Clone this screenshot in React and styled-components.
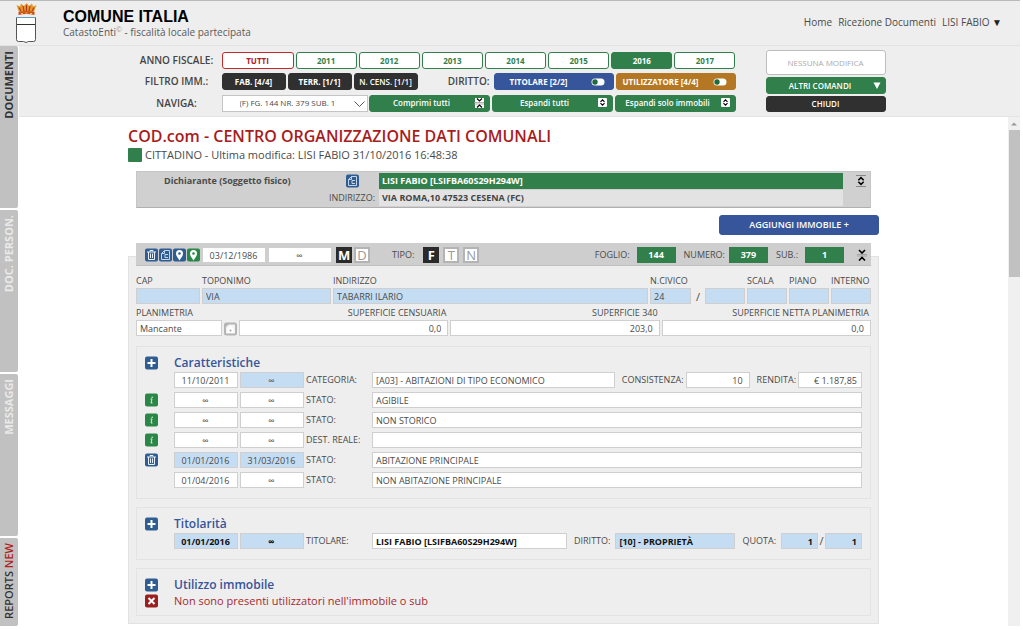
import React from "react";
import styled, { createGlobalStyle, css } from "styled-components";

const c = {
  grey: "#eeeeee",
  green: "#31804c",
  blue: "#36559b",
  icon: "#2f5d92",
  red: "#b02020",
  dark: "#303030",
  text: "#4a4a4a",
  sky: "#c5ddf3",
  line: "#cfcfcf",
};

const GlobalStyle = createGlobalStyle`
  *, *::before, *::after { box-sizing: border-box; }
  body {
    margin: 0;
    background: #fff;
    color: ${c.text};
    font-family: "Open Sans", "Liberation Sans", sans-serif;
    font-size: 9px;
    line-height: 14px;
  }
  button, input, select { font: inherit; color: inherit; margin: 0; border-radius: 0; min-width: 0; }
  h1, h2, h3, p { margin: 0; }
`;

/* ---------- page frame ---------- */

const Page = styled.div`
  margin-right: 3px;
  border-top: 1px solid #b9b9b9;
`;

const Header = styled.header`
  display: flex;
  align-items: center;
  height: 45px;
  padding: 0 18px 0 15px;
  background: ${c.grey};
  border-bottom: 1px solid #e2e2e2;
`;

const Brand = styled.div`
  flex: 1;
  margin-left: 25px;
  padding-top: 2px;
`;

const BrandName = styled.h1`
  font: bold 16px/16px "Liberation Sans", sans-serif;
  color: #000;
`;

const BrandLine = styled.p`
  font-size: 10px;
  line-height: 14px;
  color: #5a5a5a;
  sup { font-size: 7px; line-height: 1px; color: #999; }
`;

const Nav = styled.nav`
  display: flex;
  gap: 6px;
  font-size: 10px;
  padding-bottom: 2px;
  a { color: ${c.text}; text-decoration: none; }
  span { color: #222; }
`;

const Body = styled.div`
  display: flex;
`;

const SideTabs = styled.nav`
  display: flex;
  flex-direction: column;
  gap: 2px;
  width: 19px;
  padding-right: 1px;
`;

const SideTab = styled.button`
  display: flex;
  align-items: flex-start;
  justify-content: center;
  width: 18px;
  height: ${(p) => (p.$last ? "auto" : "162px")};
  flex: ${(p) => (p.$last ? "1" : "none")};
  padding: 5px 0 0;
  border: 0;
  border-radius: 0 2px 2px 0;
  background: #c1c1c1;
  color: ${(p) => (p.$dim ? "#e9e9e9" : "#333")};
  font-size: 11px;
  line-height: 14px;
  font-weight: ${(p) => (p.$last ? 600 : 700)};
  span { writing-mode: vertical-rl; transform: rotate(180deg); white-space: nowrap; }
  em { font-style: normal; color: ${c.red}; }
`;

const Column = styled.div`
  flex: 1;
  min-width: 0;
`;

/* ---------- toolbar ---------- */

const Toolbar = styled.div`
  height: 71px;
  padding: 4px 20px 0 0;
  background: ${c.grey};
  border-bottom: 1px solid #e4e4e4;
`;

const ToolbarInner = styled.div`
  display: flex;
  gap: 30px;
  max-width: 752px;
  margin: 0 auto;
`;

const ToolRows = styled.div`
  flex: 1;
  display: grid;
  gap: 4px;
  padding-top: 2px;
`;

const ToolRow = styled.div`
  display: flex;
  gap: 2px;
  height: 17px;
`;

const ToolLabel = styled.span`
  width: ${(p) => (p.$narrow ? "72px" : "86px")};
  text-align: ${(p) => (p.$narrow ? "right" : "center")};
  padding-right: ${(p) => (p.$narrow ? "2px" : "0")};
  font-size: 10px;
  line-height: 16px;
  font-weight: 600;
  color: #444;
`;

const tones = {
  green: css`background: ${c.green}; border-color: ${c.green}; color: #fff;`,
  dark: css`background: ${c.dark}; border-color: ${c.dark}; color: #fff;`,
  blue: css`background: ${c.blue}; border-color: ${c.blue}; color: #fff;`,
  amber: css`background: #b47723; border-color: #b47723; color: #fff;`,
  greenLine: css`background: #fff; border-color: ${c.green}; color: ${c.green};`,
  redLine: css`background: #fff; border-color: #c02a2a; color: ${c.red};`,
  idle: css`background: #fff; border-color: #bdbdbd; color: #aaa; font-weight: 400;`,
};

const Button = styled.button`
  display: flex;
  align-items: center;
  justify-content: center;
  gap: ${(p) => (p.$inset ? 8 : 3)}px;
  flex: ${(p) => (p.$w ? "none" : "1")};
  width: ${(p) => (p.$w ? p.$w + "px" : "auto")};
  height: ${(p) => p.$h || 17}px;
  padding: 0 ${(p) => (p.$inset ? 8 : 4)}px 0 ${(p) => (p.$inset ? 0 : 4)}px;
  border: 1px solid;
  border-radius: 3px;
  font-size: ${(p) => p.$size || 8}px;
  line-height: 14px;
  font-weight: ${(p) => (p.$semi ? 600 : 700)};
  white-space: nowrap;
  ${(p) => tones[p.$tone]}
  > span { flex: 1; text-align: center; }
  > svg { flex: none; }
`;

const NavSelect = styled.select`
  width: 146px;
  height: 17px;
  padding: 0 16px 0 17px;
  border: 1px solid #c4c4c4;
  appearance: none;
  background: #fff;
  font-size: 8px;
`;

const SelectWrap = styled.div`
  position: relative;
  display: flex;
  margin-right: -1px;
  svg { position: absolute; right: 2px; top: 5px; pointer-events: none; }
`;

const Commands = styled.div`
  display: grid;
  gap: 2px;
  width: 120px;
  align-content: start;
`;

/* ---------- content ---------- */

const Viewport = styled.div`
  display: flex;
  background: #fff;
`;

const Content = styled.main`
  flex: 1;
  min-width: 0;
  padding: 8px 20px 2px 0;
`;

const ContentInner = styled.div`
  max-width: 751px;
  margin: 0 auto;
`;

const Scroll = styled.div`
  width: 12px;
  background: #f0f0f0;
  svg { display: block; margin: 0 auto; }
`;

const Thumb = styled.div`
  height: 147px;
  margin-left: 1px;
  background: #c1c1c1;
`;

const Title = styled.h2`
  font-size: 16px;
  line-height: 22px;
  font-weight: 600;
  color: #a81c1c;
`;

const Status = styled.p`
  display: flex;
  align-items: center;
  gap: 3px;
  height: 16px;
  font-size: 11px;
  &::before { content: ""; width: 14px; height: 14px; border-radius: 1px; background: ${c.green}; }
`;

const Declarant = styled.section`
  display: grid;
  grid-template-columns: 209px 33px 1fr 27px;
  row-gap: 1px;
  align-items: center;
  margin: 8px 8px 0;
  padding: 1px 0;
  background: #d0d0d0;
  border: 1px solid #c6c6c6;
  border-bottom-color: #b0b0b0;
  > svg { justify-self: end; margin-right: 3px; }
`;

const DeclarantName = styled.strong`
  padding-left: 27px;
`;

const Strip = styled.div`
  height: 16px;
  padding-left: 3px;
  line-height: 16px;
  font-weight: 700;
  background: ${(p) => (p.$on ? c.green : "#e3e3e3")};
  color: ${(p) => (p.$on ? "#fff" : "#444")};
`;

const StripLabel = styled.span`
  grid-column: 1 / 3;
  padding-right: 4px;
  text-align: right;
`;

const AddRow = styled.div`
  display: flex;
  justify-content: flex-end;
  margin-top: 7px;
`;

const Panel = styled.section`
  margin-top: 21px;
  padding: 0 7px 7px;
  background: ${c.grey};
  border: 1px solid #e2e2e2;
`;

const PanelBar = styled.div`
  display: flex;
  align-items: center;
  gap: 2px;
  height: 23px;
  margin-top: -14px;
  padding: 2px 3px 0 9px;
  background: #cecece;
  border: 1px solid #c0c0c0;
  border-width: 0 0 1px;
`;

const IconGroup = styled.div`
  display: flex;
  gap: 1px;
`;

const Letters = styled.div`
  display: flex;
  gap: ${(p) => p.$gap}px;
  margin: 0 ${(p) => p.$after || 0}px 0 2px;
`;

const IconButton = styled.button`
  display: flex;
  padding: 0;
  border: 0;
  background: none;
`;

const Letter = styled.button`
  width: 16px;
  height: 16px;
  padding: 0;
  border: 2px solid ${(p) => (p.$on ? "#2a2a2a" : "#b4b4b4")};
  background: ${(p) => (p.$on ? "#2a2a2a" : "#fff")};
  color: ${(p) => (p.$on ? "#fff" : "#999")};
  font-size: 13px;
  line-height: 12px;
  font-weight: ${(p) => (p.$on ? 700 : 400)};
`;

const BarLabel = styled.span`
  flex: ${(p) => (p.$grow ? 1 : "none")};
  padding: 0 ${(p) => p.$after || 5}px 0 ${(p) => p.$before || 6}px;
  text-align: ${(p) => (p.$grow ? "right" : "left")};
`;

const Badge = styled.strong`
  width: 39px;
  height: 16px;
  margin-right: ${(p) => p.$after || 0}px;
  background: ${c.green};
  color: #fff;
  line-height: 16px;
  text-align: center;
`;

const Input = styled.input`
  width: ${(p) => (p.$w ? p.$w + "px" : "100%")};
  height: 16px;
  padding: 0 ${(p) => p.$end || 4}px 0 3px;
  border: 1px solid ${c.line};
  background: ${(p) => (p.$blue ? c.sky : "#fff")};
  text-align: ${(p) => p.$align || "left"};
  font-weight: ${(p) => (p.$bold ? 700 : 400)};
  color: ${(p) => (p.$bold ? "#111" : c.text)};
  outline: 0;
`;

const FieldRow = styled.div`
  display: grid;
  grid-template-columns: ${(p) => p.$cols};
  column-gap: 2px;
  align-items: end;
  margin-top: ${(p) => p.$top || 1}px;
`;

const Field = styled.label`
  display: block;
  text-align: ${(p) => (p.$right ? "right" : "left")};
  white-space: nowrap;
  span { display: block; height: 15px; line-height: 16px; padding-right: ${(p) => (p.$right ? 2 : 0)}px; }
  input { display: block; }
`;

const Slash = styled.span`
  flex: none;
  width: 7px;
  justify-self: center;
  text-align: center;
  font-size: 11px;
`;

const Card = styled.section`
  margin-top: ${(p) => p.$top || 8}px;
  padding: 7px 8px ${(p) => p.$bottom}px 8px;
  border: 1px solid #e3e3e3;
`;

const CardHead = styled.div`
  display: grid;
  grid-template-columns: 29px 1fr;
  align-items: center;
  height: ${(p) => (p.$low ? 14 : 18)}px;
`;

const CardTitle = styled.h3`
  font-size: 12px;
  line-height: 16px;
  font-weight: 600;
  color: ${c.blue};
`;

const Line = styled.div`
  display: grid;
  grid-template-columns: 27px 64px 64px 64px 1fr;
  column-gap: 2px;
  align-items: center;
  height: 16px;
  margin-bottom: ${(p) => (p.$tight ? 0 : 4)}px;
`;

const Group = styled.div`
  display: flex;
  align-items: center;
  label { flex: none; text-align: right; padding: 0 ${(p) => p.$pad || 2}px 0 7px; }
  input { flex: none; }
  input:first-child { flex: 1; }
`;

const Empty = styled.p`
  font-size: 11px;
  line-height: 14px;
  color: #a52a2f;
`;

/* ---------- icons ---------- */

const Crest = () => (
  <svg width="23" height="40" viewBox="0 0 23 40" aria-hidden="true">
    <path d="M4 9 1.500 2l3.500 1.500L6 .5l3 2.500L11.500 0 14 3l3-2.500 1 3L21.500 2 19 9z" fill="#e39a2b" />
    <path d="M4 4.500l2 3.500M8 3l1 5M11.500 2v6M15 3l-1 5M19 4.500l-2 3.500" stroke="#b3371c" strokeWidth="1.200" />
    <path d="M3.500 9q8-2 16 0v3q-8-2-16 0z" fill="#c9521f" />
    <path d="M6 10.500h2M10.500 10h2M15 10.500h2" stroke="#f4c651" />
    <path d="M1.500 14.500h19v22q0 2-2 2h-5l-2.500 1-2.500-1h-5q-2 0-2-2z" fill="#fff" stroke="#555" />
    <path d="M1 14.500h20" stroke="#5f9dbb" />
    <path d="M2 21.500h18" stroke="#333" />
  </svg>
);

const Tile = ({ fill = c.icon, children }) => (
  <svg width="13" height="14" viewBox="0 0 13 14" aria-hidden="true">
    <rect x="0" y="0.500" width="13" height="13" rx="2" fill={fill} />
    {children}
  </svg>
);
const Trash = () => (
  <Tile>
    <path d="M2 4h9M5 3.500v-1h3v1" fill="none" stroke="#e8f0f7" />
    <path d="M3.500 4v7.500h6V4M5.500 5.500V10M7.500 5.500V10" fill="none" stroke="#e8f0f7" />
  </Tile>
);
const Sheet = () => (
  <Tile>
    <path d="M5.500 2.500h5v9h-8v-6zM5.500 2.500v3h-3M9 6.500H6v3h3" fill="none" stroke="#c3d5e6" />
  </Tile>
);
const Pin = ({ fill }) => (
  <Tile fill={fill}>
    <path d="M6.500 12.500C5 10 3 8 3 5.500a3.500 3.500 0 0 1 7 0C10 8 8 10 6.500 12.500z" fill="#fff" />
    <circle cx="6.500" cy="5.500" r="1.300" fill={fill || c.icon} />
  </Tile>
);
const Plus = () => (
  <Tile><path d="M6.500 3v8M2.500 7h8" stroke="#fff" strokeWidth="2" /></Tile>
);
const Cross = () => (
  <Tile fill="#9c1f1f"><path d="M3.500 4l6 6M9.500 4l-6 6" stroke="#fff" strokeWidth="2" /></Tile>
);
const Info = () => (
  <Tile fill="#2a8748">
    <path d="M5.500 6h1.500l-1 4h1.500" fill="none" stroke="#d9efc8" />
    <circle cx="7.200" cy="4.200" r="0.800" fill="#d9efc8" />
  </Tile>
);
const Upload = () => (
  <svg width="13" height="14" viewBox="0 0 13 14" aria-hidden="true">
    <rect x="1" y="1.500" width="11" height="11" rx="1.500" fill="#f4f4f4" stroke="#b4b4b4" strokeWidth="2" />
    <path d="M1 1h5L1 6z" fill="#b4b4b4" />
    <path d="M3.500 11V6.500l3-2.500 3 2.500V11z" fill="#fff" />
    <circle cx="6.500" cy="8.500" r="1" fill="#a0a0a0" />
  </svg>
);
const Expand = ({ boxed }) => (
  <svg width="12" height="12" viewBox="0 0 12 12" aria-hidden="true">
    {boxed && <rect x="2" y="1" width="9" height="9" rx="1" fill="#fff" />}
    {!boxed && <path d="M1 0.500h10M1 11.500h10" stroke="#888" />}
    <path
      d={boxed ? "M4.500 4.800l2-2 2 2M4.500 6.200l2 2 2-2" : "M3.300 5.300L6 2.600l2.700 2.700M3.300 6.700L6 9.400l2.700-2.700"}
      fill="none" stroke="#000" strokeWidth={boxed ? 1.1 : 1.5}
    />
  </svg>
);
const Collapse = ({ boxed }) => (
  <svg width="12" height="12" viewBox="0 0 12 12" aria-hidden="true">
    {boxed && <rect x="2" y="1" width="9" height="10" fill="#fff" />}
    <path d="M1 5.500h10M1 7h10" stroke="#999" strokeWidth="0.800" />
    <path
      d={boxed ? "M4 1.500l2.500 2.500L9 1.500M4 10.500L6.500 8 9 10.500" : "M3 1l3 3 3-3M3 11.500l3-3 3 3"}
      fill="none" stroke="#000" strokeWidth={boxed ? 1.2 : 1.6}
    />
  </svg>
);
const Toggle = () => (
  <svg width="14" height="8" viewBox="0 0 14 8" aria-hidden="true">
    <rect x="0.500" y="0.500" width="13" height="7" rx="3.500" fill="#fff" />
    <circle cx="4" cy="4" r="2.700" fill="#1f6b3b" />
  </svg>
);
const Down = () => (
  <svg width="8" height="7" viewBox="0 0 8 7" aria-hidden="true"><path d="M0.500 0.500h7L4 7z" fill="#fff" /></svg>
);
const Chevron = () => (
  <svg width="13" height="8" viewBox="0 0 13 8" aria-hidden="true">
    <path d="M1.500 1.500l5 5 5-5" fill="none" stroke="#555" />
  </svg>
);

/* ---------- data ---------- */

const years = ["2011", "2012", "2013", "2014", "2015", "2016", "2017"];
const states = [
  { id: "agi", icon: <Info />, label: "STATO:", value: "AGIBILE" },
  { id: "sto", icon: <Info />, label: "STATO:", value: "NON STORICO" },
  { id: "des", icon: <Info />, label: "DEST. REALE:", value: "" },
  { id: "abi", icon: <Trash />, label: "STATO:", value: "ABITAZIONE PRINCIPALE", from: "01/01/2016", to: "31/03/2016", blue: true },
  { id: "nab", icon: null, label: "STATO:", value: "NON ABITAZIONE PRINCIPALE", from: "01/04/2016" },
];

const DateInput = (p) => <Input $align="center" {...p} />;

export default function App() {
  return (
    <>
      <GlobalStyle />
      <Page>
        <Header>
          <Crest />
          <Brand>
            <BrandName>COMUNE ITALIA</BrandName>
            <BrandLine>CatastoEnti<sup>©</sup> - fiscalità locale partecipata</BrandLine>
          </Brand>
          <Nav>
            <a href="#home">Home</a>
            <a href="#ricezione">Ricezione Documenti</a>
            <a href="#utente">LISI FABIO <span>▼</span></a>
          </Nav>
        </Header>
        <Body>
          <SideTabs>
            <SideTab><span>DOCUMENTI</span></SideTab>
            <SideTab $dim><span>DOC. PERSON.</span></SideTab>
            <SideTab $dim><span>MESSAGGI</span></SideTab>
            <SideTab $last><span>REPORTS <em>NEW</em></span></SideTab>
          </SideTabs>
          <Column>
            <Toolbar>
              <ToolbarInner>
                <ToolRows>
                  <ToolRow>
                    <ToolLabel>ANNO FISCALE:</ToolLabel>
                    <Button $tone="redLine" $w={72}>TUTTI</Button>
                    {years.map((y) => (
                      <Button key={y} $tone={y === "2016" ? "green" : "greenLine"}>{y}</Button>
                    ))}
                  </ToolRow>
                  <ToolRow>
                    <ToolLabel>FILTRO IMM.:</ToolLabel>
                    <Button $tone="dark" $w={64}>FAB. [4/4]</Button>
                    <Button $tone="dark" $w={64}>TERR. [1/1]</Button>
                    <Button $tone="dark" $w={64} $semi>N. CENS. [1/1]</Button>
                    <ToolLabel $narrow>DIRITTO:</ToolLabel>
                    <Button $tone="blue" $inset><span>TITOLARE [2/2]</span><Toggle /></Button>
                    <Button $tone="amber" $inset><span>UTILIZZATORE [4/4]</span><Toggle /></Button>
                  </ToolRow>
                  <ToolRow>
                    <ToolLabel as="label" htmlFor="naviga">NAVIGA:</ToolLabel>
                    <SelectWrap>
                      <NavSelect id="naviga"><option>(F) FG. 144 NR. 379 SUB. 1</option></NavSelect>
                      <Chevron />
                    </SelectWrap>
                    <Button $tone="green" $semi><span>Comprimi tutti</span><Collapse boxed /></Button>
                    <Button $tone="green" $semi><span>Espandi tutti</span><Expand boxed /></Button>
                    <Button $tone="green" $semi><span>Espandi solo immobili</span><Expand boxed /></Button>
                  </ToolRow>
                </ToolRows>
                <Commands>
                  <Button $tone="idle" $h={25}>NESSUNA MODIFICA</Button>
                  <Button $tone="green" $h={17} $semi><span>ALTRI COMANDI</span><Down /></Button>
                  <Button $tone="dark" $h={16} $semi>CHIUDI</Button>
                </Commands>
              </ToolbarInner>
            </Toolbar>
            <Viewport>
              <Content>
                <ContentInner>
                  <Title>COD.com - CENTRO ORGANIZZAZIONE DATI COMUNALI</Title>
                  <Status>CITTADINO - Ultima modifica: LISI FABIO 31/10/2016 16:48:38</Status>

                  <Declarant>
                    <DeclarantName>Dichiarante (Soggetto fisico)</DeclarantName>
                    <IconButton aria-label="Scheda"><Sheet /></IconButton>
                    <Strip $on>LISI FABIO [LSIFBA60S29H294W]</Strip>
                    <Expand />
                    <StripLabel>INDIRIZZO:</StripLabel>
                    <Strip>VIA ROMA,10 47523 CESENA (FC)</Strip>
                  </Declarant>

                  <AddRow>
                    <Button $tone="blue" $w={160} $h={20} $size={9} $semi>AGGIUNGI IMMOBILE +</Button>
                  </AddRow>

                  <Panel>
                    <PanelBar>
                      <IconGroup>
                        <IconButton aria-label="Elimina"><Trash /></IconButton>
                        <IconButton aria-label="Scheda"><Sheet /></IconButton>
                        <IconButton aria-label="Mappa"><Pin /></IconButton>
                        <IconButton aria-label="Mappa catastale"><Pin fill="#2a8748" /></IconButton>
                      </IconGroup>
                      <DateInput $w={64} aria-label="Dal" defaultValue="03/12/1986" />
                      <DateInput $w={64} aria-label="Al" defaultValue="∞" />
                      <Letters $gap={2} $after={14}>
                        <Letter $on>M</Letter>
                        <Letter>D</Letter>
                      </Letters>
                      <BarLabel>TIPO:</BarLabel>
                      <Letters $gap={4}>
                        <Letter $on>F</Letter>
                        <Letter>T</Letter>
                        <Letter>N</Letter>
                      </Letters>
                      <BarLabel $grow>FOGLIO:</BarLabel>
                      <Badge>144</Badge>
                      <BarLabel $after={2}>NUMERO:</BarLabel>
                      <Badge>379</Badge>
                      <BarLabel>SUB.:</BarLabel>
                      <Badge $after={10}>1</Badge>
                      <IconButton aria-label="Comprimi"><Collapse /></IconButton>
                    </PanelBar>

                    <FieldRow $cols="64px 129px 1fr 41px 10px 40px 40px 40px 40px" $top={7}>
                      <Field><span>CAP</span><Input $blue /></Field>
                      <Field><span>TOPONIMO</span><Input $blue defaultValue="VIA" /></Field>
                      <Field><span>INDIRIZZO</span><Input $blue defaultValue="TABARRI ILARIO" /></Field>
                      <Field><span>N.CIVICO</span><Input $blue defaultValue="24" /></Field>
                      <Slash>/</Slash>
                      <Input $blue aria-label="Esponente" />
                      <Field><span>SCALA</span><Input $blue /></Field>
                      <Field><span>PIANO</span><Input $blue /></Field>
                      <Field><span>INTERNO</span><Input $blue /></Field>
                    </FieldRow>
                    <FieldRow $cols="86px 13px 1fr 1fr 1fr">
                      <Field><span>PLANIMETRIA</span><Input defaultValue="Mancante" /></Field>
                      <IconButton aria-label="Carica planimetria"><Upload /></IconButton>
                      <Field $right><span>SUPERFICIE CENSUARIA</span><Input $align="right" $end={6} defaultValue="0,0" /></Field>
                      <Field $right><span>SUPERFICIE 340</span><Input $align="right" $end={6} defaultValue="203,0" /></Field>
                      <Field $right><span>SUPERFICIE NETTA PLANIMETRIA</span><Input $align="right" $end={6} defaultValue="0,0" /></Field>
                    </FieldRow>

                    <Card $top={10} $bottom={6}>
                      <CardHead><IconButton aria-label="Aggiungi caratteristica"><Plus /></IconButton><CardTitle>Caratteristiche</CardTitle></CardHead>
                      <Line>
                        <i />
                        <DateInput aria-label="Dal" defaultValue="11/10/2011" />
                        <DateInput $blue aria-label="Al" defaultValue="∞" />
                        <label htmlFor="cat">CATEGORIA:</label>
                        <Group>
                          <Input id="cat" defaultValue="[A03] - ABITAZIONI DI TIPO ECONOMICO" />
                          <label htmlFor="cons">CONSISTENZA:</label>
                          <Input id="cons" $w={64} $align="right" $end={6} defaultValue="10" />
                          <label htmlFor="rend">RENDITA:</label>
                          <Input id="rend" $w={64} $align="right" defaultValue="€ 1.187,85" />
                        </Group>
                      </Line>
                      {states.map((s) => (
                        <Line key={s.id}>
                          {s.icon ? <IconButton aria-label={s.label}>{s.icon}</IconButton> : <i />}
                          <DateInput $blue={s.blue} aria-label="Dal" defaultValue={s.from || "∞"} />
                          <DateInput $blue={s.blue} aria-label="Al" defaultValue={s.to || "∞"} />
                          <label htmlFor={s.id}>{s.label}</label>
                          <Input id={s.id} defaultValue={s.value} />
                        </Line>
                      ))}
                    </Card>

                    <Card $bottom={10}>
                      <CardHead><IconButton aria-label="Aggiungi titolarità"><Plus /></IconButton><CardTitle>Titolarità</CardTitle></CardHead>
                      <Line $tight>
                        <i />
                        <DateInput $blue $bold aria-label="Dal" defaultValue="01/01/2016" />
                        <DateInput $blue $bold aria-label="Al" defaultValue="∞" />
                        <label htmlFor="tit">TITOLARE:</label>
                        <Group $pad={5}>
                          <Input id="tit" $bold defaultValue="LISI FABIO [LSIFBA60S29H294W]" />
                          <label htmlFor="dir">DIRITTO:</label>
                          <Input id="dir" $w={120} $blue $bold defaultValue="[10] - PROPRIETÀ" />
                          <label htmlFor="quo">QUOTA:</label>
                          <Input id="quo" $w={37} $blue $bold $align="right" defaultValue="1" />
                          <Slash>/</Slash>
                          <Input aria-label="Quota, denominatore" $w={37} $blue $bold $align="right" defaultValue="1" />
                        </Group>
                      </Line>
                    </Card>

                    <Card $bottom={7}>
                      <CardHead><IconButton aria-label="Aggiungi utilizzo"><Plus /></IconButton><CardTitle>Utilizzo immobile</CardTitle></CardHead>
                      <CardHead $low><Cross /><Empty>Non sono presenti utilizzatori nell'immobile o sub</Empty></CardHead>
                    </Card>
                  </Panel>
                </ContentInner>
              </Content>
              <Scroll aria-hidden="true">
                <svg width="12" height="13" viewBox="0 0 12 13"><path d="M3 8.500l3-3 3 3z" fill="#999" /></svg>
                <Thumb />
              </Scroll>
            </Viewport>
          </Column>
        </Body>
      </Page>
    </>
  );
}
